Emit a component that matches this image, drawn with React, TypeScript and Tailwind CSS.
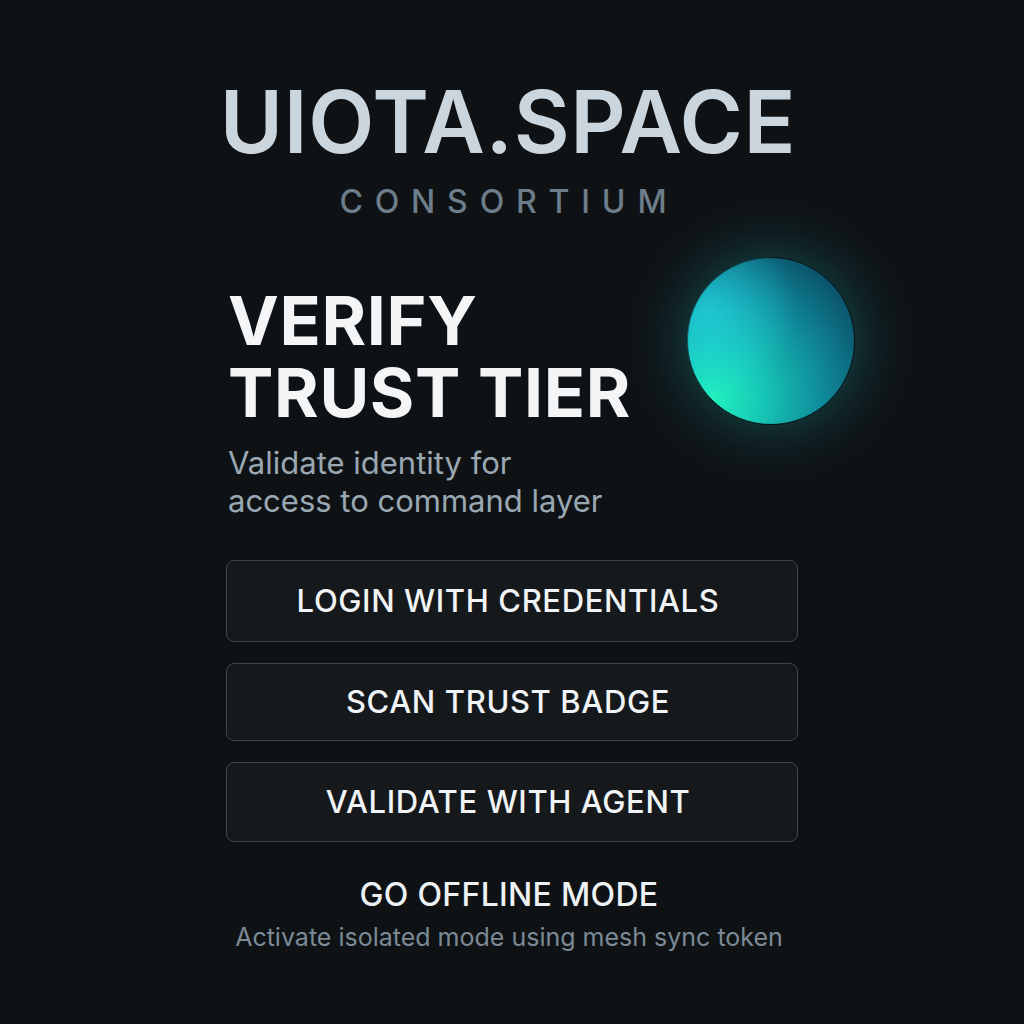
import React from 'react'

const Orb = () => {
    return (
        <div className="relative w-[168px] h-[168px] shrink-0">
            <div className="absolute -inset-16 rounded-full bg-[radial-gradient(circle,rgba(20,170,165,0.22)_0%,rgba(20,110,125,0.10)_45%,rgba(15,18,21,0)_70%)]" />
            <div className="relative w-full h-full rounded-full border border-[#07161a] bg-[radial-gradient(circle_at_15%_85%,#22f0bd_0%,#17cdb8_22%,#0f8a9a_55%,#0b4f68_85%,#0a4660_100%)] shadow-[0_0_50px_rgba(30,210,190,0.22)]" />
            <div className="absolute inset-0 rounded-full bg-[radial-gradient(circle_at_12%_32%,rgba(40,225,240,0.6)_0%,rgba(40,225,240,0)_48%)]" />
        </div>
    )
}

const ActionButton = ({ label, h }: { label: string; h: string }) => {
    return (
        <button className={`w-full ${h} rounded-lg border border-[#3e474e] bg-[#16191c] pr-[8px] text-[31px] font-medium tracking-[0.02em] text-[#f1f4f6]`}>
            {label}
        </button>
    )
}

const App = () => {
    return (
        <div className="min-h-[1024px] w-full bg-[#0f1215] font-['Inter',sans-serif]">
            <div className="w-[572px] mx-auto flex flex-col">
                <h1 className="mt-[74px] -mx-[20px] pr-[8px] text-center text-[86px] leading-[96px] font-semibold text-[#cbd5dd] tracking-[0.008em] whitespace-nowrap">
                    UIOTA.SPACE
                </h1>
                <p className="mt-[12px] pr-[18px] text-center text-[32px] leading-[40px] font-medium text-[#6d7d89] tracking-[0.37em] pl-[0.37em]">
                    CONSORTIUM
                </p>

                <div className="mt-[62px] flex items-start justify-between">
                    <div className="pl-[2px]">
                        <h2 className="text-[68px] leading-[72px] font-bold text-[#f3f5f7] tracking-[0.01em]">
                            VERIFY
                            <br />
                            TRUST TIER
                        </h2>
                        <p className="mt-[16px] text-[31px] leading-[38px] text-[#9aa8b3]">
                            Validate identity for
                            <br />
                            access to command layer
                        </p>
                    </div>
                    <div className="mt-[-27px] mr-[-57px]">
                        <Orb />
                    </div>
                </div>

                <div className="mt-[40px] flex flex-col gap-[21px]">
                    <ActionButton label="LOGIN WITH CREDENTIALS" h="h-[82px]" />
                    <ActionButton label="SCAN TRUST BADGE" h="h-[78px]" />
                    <ActionButton label="VALIDATE WITH AGENT" h="h-[80px]" />
                </div>

                <p className="mt-[32px] pr-[6px] text-center text-[32px] leading-[42px] font-medium text-[#eef2f5] tracking-[0.01em]">
                    GO OFFLINE MODE
                </p>
                <p className="mt-[4px] pr-[6px] text-center text-[25px] leading-[34px] text-[#7b8a96] whitespace-nowrap">
                    Activate isolated mode using mesh sync token
                </p>
            </div>
        </div>
    )
}

export default App
